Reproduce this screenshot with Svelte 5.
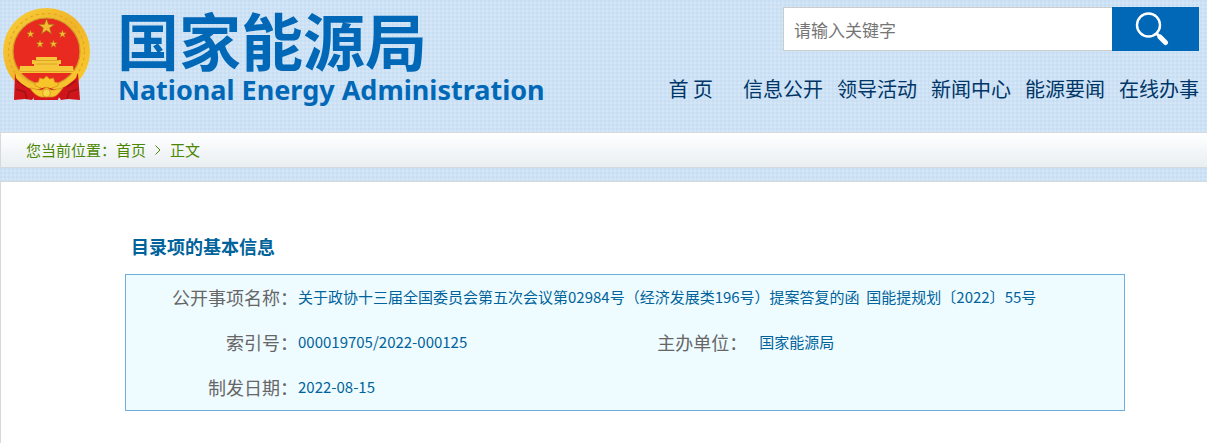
<script lang="ts">
    type MenuItem = {
        label: string;
        href: string;
    };

    const menu: MenuItem[] = [
        { label: '信息公开', href: '#xxgk' },
        { label: '领导活动', href: '#ldhd' },
        { label: '新闻中心', href: '#xwzx' },
        { label: '能源要闻', href: '#nyyw' },
        { label: '在线办事', href: '#zxbs' }
    ];

    const star = '0,-10 2.4,-3.2 9.5,-3.1 3.8,1.2 5.9,8.1 0,4 -5.9,8.1 -3.8,1.2 -9.5,-3.1 -2.4,-3.2';

    let keyword = $state('');
</script>

<header class="header">
    <a class="brand" href="#home">
        <svg class="emblem" viewBox="0 0 88 96" aria-hidden="true">
            <defs>
                <linearGradient id="gold" x1="0" y1="0" x2="1" y2="1">
                    <stop offset="0" stop-color="#f9d03a" />
                    <stop offset="0.5" stop-color="#f0b428" />
                    <stop offset="1" stop-color="#fbd02c" />
                </linearGradient>
            </defs>
            <ellipse cx="43.5" cy="44.5" rx="43.5" ry="43.5" fill="url(#gold)" />
            <circle cx="43.5" cy="44.5" r="38" fill="none" stroke="#e3a423" stroke-width="1.2" stroke-dasharray="3 3" />
            <circle cx="43.5" cy="44.5" r="33.5" fill="#e92a20" stroke="#d09a2a" stroke-width="1.2" />
            <g fill="#f3ba32" stroke="#a96414" stroke-width="0.9">
                <polygon points={star} transform="translate(43.5 20) scale(0.86)" />
                <polygon points={star} transform="translate(27.5 27) scale(0.42)" />
                <polygon points={star} transform="translate(59.5 27) scale(0.42)" />
                <polygon points={star} transform="translate(37 37) scale(0.42)" />
                <polygon points={star} transform="translate(50.5 37) scale(0.42)" />
            </g>
            <path fill="#f6c739" d="M33 50h21v3h4v4h-2v2h14l1 7H16l1-7h14v-2h-2v-4h4z" />
            <path fill="none" stroke="#d79d27" stroke-width="0.8" d="M31 53.5h25M33 57h21M17 64.500h53" />
            <path fill="#cf151a" d="M12 66c7 9 15 14 25 16l-8 11-7-1-11 1zM75 66c-7 9-15 14-25 16l8 11 7-1 12 1z" />
            <path fill="none" stroke="#9f1315" stroke-width="1.5" d="M14 74l9 6M13 82l9 3 2 7M73 74l-9 6M75 82l-9 3-2 7" />
            <path fill="#f6c230" d="M12 65c8 8 16 13 24 14l7-4 8 4c8-1 16-6 24-14l-2 6c-7 7-16 12-22 13l-8-3-7 3c-7-1-17-5-23-13z" />
            <path fill="#f7c529" stroke="#d58b17" stroke-width="0.7" d="M43.5 69l3 3 4-1 1 4 4 1-1 3-11 4-11-4-1-3 4-1 1-4 4 1z" />
            <path fill="#d9161b" d="M29 84l14-4 15 4-3 9H31z" />
            <path fill="#f7c52e" stroke="#d08c20" stroke-width="0.7" d="M27 81c6 1 8 2 12 2l4.500-3 4.500 3c4 0 6-1 12-2-4 5-7 9-11 9H38c-4-1-8-4-11-9z" />
            <circle cx="43.5" cy="86" r="4" fill="#f9d545" stroke="#d08c20" stroke-width="0.7" />
        </svg>
        <span class="brand-text">
            <span class="brand-cn">国家能源局</span>
            <span class="brand-en">National Energy Administration</span>
        </span>
    </a>

    <div class="tools">
        <form class="search" role="search" onsubmit={(e) => e.preventDefault()}>
            <input type="text" bind:value={keyword} placeholder="请输入关键字" aria-label="请输入关键字" />
            <button type="submit" aria-label="搜索">
                <svg viewBox="0 0 34 34" aria-hidden="true">
                    <circle cx="13.5" cy="13" r="11.5" fill="none" stroke="#fff" stroke-width="2.4" />
                    <path d="M21 21l3 3" stroke="#fff" stroke-width="3" />
                    <path d="M25 25l5.500 5.500" stroke="#fff" stroke-width="5" stroke-linecap="round" />
                </svg>
            </button>
        </form>
        <nav class="menu">
            <a class="menu-home" href="#home">首 页</a>
            {#each menu as item}
                <a href={item.href}>{item.label}</a>
            {/each}
        </nav>
    </div>
</header>

<div class="crumbs">
    您当前位置：<a href="#home">首页</a>
    <svg viewBox="0 0 6 10" aria-hidden="true"><path d="M0.5 0.5L5 5L0.5 9.5" fill="none" stroke="#4c8600" /></svg>
    <a href="#article">正文</a>
</div>

<main class="content">
    <h2>目录项的基本信息</h2>
    <table class="info">
        <colgroup>
            <col class="col-label" />
            <col class="col-value" />
            <col class="col-unit" />
            <col />
        </colgroup>
        <tbody>
            <tr>
                <th scope="row">公开事项名称：</th>
                <td colspan="3">关于政协十三届全国委员会第五次会议第02984号（经济发展类196号）提案答复的函&nbsp; 国能提规划〔2022〕55号</td>
            </tr>
            <tr>
                <th scope="row">索引号：</th>
                <td>000019705/2022-000125</td>
                <th class="unit" scope="row">主办单位：</th>
                <td>国家能源局</td>
            </tr>
            <tr>
                <th scope="row">制发日期：</th>
                <td colspan="3">2022-08-15</td>
            </tr>
        </tbody>
    </table>
</main>

<style>
    :global(body) {
        margin: 0;
        font-family: "Noto Sans CJK SC", sans-serif;
        background-color: #d4e6f7;
        background-image:
            repeating-linear-gradient(90deg, rgba(150, 188, 222, 0.1) 0 2px, transparent 2px 4px),
            repeating-linear-gradient(180deg, rgba(150, 188, 222, 0.1) 0 2px, transparent 2px 4px);
    }

    :global(#app) {
        display: flex;
        flex-direction: column;
        min-height: 100vh;
    }

    a {
        color: inherit;
        text-decoration: none;
    }

    .header {
        display: flex;
        justify-content: space-between;
        box-sizing: border-box;
        min-height: 132px;
        padding: 7px 8px 0 3px;
    }

    .brand {
        display: flex;
        align-items: flex-start;
        gap: 26px;
        color: #0068b7;
        white-space: nowrap;
    }

    .emblem {
        width: 88px;
        height: 96px;
    }

    .brand-text {
        display: flex;
        flex-direction: column;
        font-weight: 700;
    }

    .brand-cn {
        font-size: 62px;
        line-height: 64px;
    }

    .brand-en {
        padding-left: 1px;
        font-family: "Noto Sans", sans-serif;
        font-size: 27px;
        line-height: 38px;
    }

    .tools {
        display: flex;
        flex-direction: column;
        align-items: flex-end;
        gap: 20px;
    }

    .search {
        display: flex;
    }

    .search input {
        box-sizing: border-box;
        width: 329px;
        height: 44px;
        padding: 0 10px;
        border: 1px solid #ccc;
        border-right: 0;
        border-radius: 0;
        background: #fff;
        color: #333;
        font-family: inherit;
        font-size: 17px;
        outline: none;
    }

    .search input::placeholder {
        color: #757575;
    }

    .search button {
        display: flex;
        align-items: center;
        justify-content: center;
        width: 87px;
        height: 44px;
        padding: 0 8px 0 0;
        border: 0;
        background: #0068b7;
        cursor: pointer;
    }

    .search button svg {
        width: 34px;
        height: 34px;
    }

    .menu {
        display: flex;
        gap: 14px;
        color: #003567;
        font-size: 20px;
        line-height: 36px;
        white-space: nowrap;
    }

    .menu-home {
        margin-right: 16px;
    }

    .crumbs {
        display: flex;
        align-items: center;
        height: 34px;
        padding-left: 25px;
        border: 1px solid #d5d8dc;
        border-right: 0;
        background: linear-gradient(180deg, #fff, #e9eef2);
        color: #4c8600;
        font-size: 15px;
        line-height: 32px;
    }

    .crumbs svg {
        width: 6px;
        height: 10px;
        margin: 0 9px;
    }

    .content {
        flex: 1;
        margin-top: 13px;
        padding: 48px 82px 32px 124px;
        border: 1px solid #d5d8dc;
        border-right: 0;
        border-bottom: 0;
        background: #fff;
    }

    h2 {
        margin: 0 0 12px;
        padding-left: 6px;
        color: #00639b;
        font-size: 18px;
        line-height: 32px;
    }

    .info {
        width: 100%;
        border: 1px solid #6facdf;
        border-spacing: 0;
        table-layout: fixed;
        background: #eefbff;
    }

    .col-label {
        width: 172px;
    }

    .col-value {
        width: 36%;
    }

    .col-unit {
        width: 102px;
    }

    .info th,
    .info td {
        height: 43px;
        padding: 0 0 2px;
        white-space: nowrap;
    }

    .info th {
        color: #666;
        font-size: 18px;
        font-weight: 400;
        text-align: right;
    }

    .info .unit {
        text-align: left;
    }

    .info td {
        color: #00639b;
        font-size: 15px;
    }
</style>
